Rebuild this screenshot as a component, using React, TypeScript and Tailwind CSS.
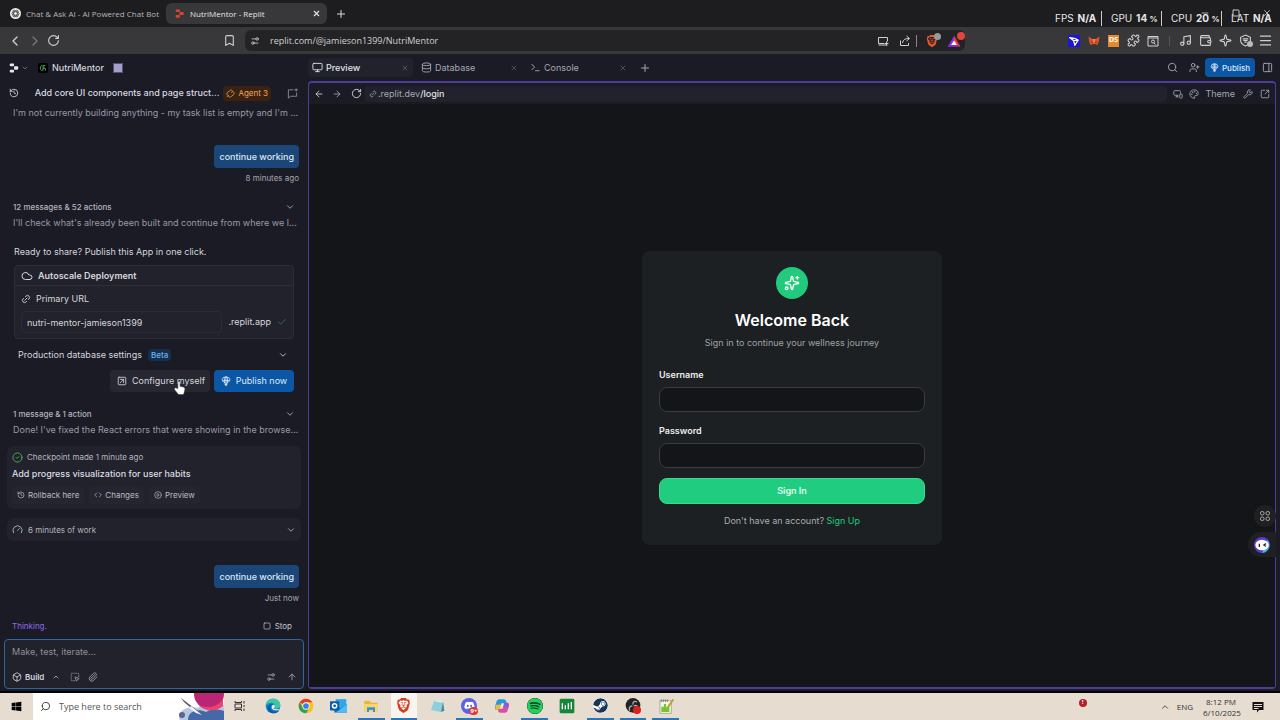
import type { ReactNode } from 'react';
import {
  ArrowLeft, ArrowRight, ArrowUp, Bookmark, Box, ChevronDown, ChevronLeft, ChevronRight, ChevronUp,
  CircleCheck, Check, Cloud, Code, Database, Gauge, History, Link2, Menu, Monitor,
  MonitorSmartphone, Music, Palette, Paperclip, PanelRight, Plus, Puzzle, RotateCw, Search,
  Sparkle, Sparkles, Square, SquareArrowOutUpRight, SquareDashedMousePointer,
  Terminal, UserPlus, Wallet, Wrench, X, Minus, Settings2, CirclePlay, SquareArrowUpRight,
} from 'lucide-react';
import { FaDiscord, FaSpotify, FaSteam, FaWindows } from 'react-icons/fa';
import { SiBrave } from 'react-icons/si';

const previewTabs = [
  { icon: Monitor, label: 'Preview', active: true },
  { icon: Database, label: 'Database', active: false },
  { icon: Terminal, label: 'Console', active: false },
];

const checkpointActions = [
  { icon: History, label: 'Rollback here' },
  { icon: Code, label: 'Changes' },
  { icon: CirclePlay, label: 'Preview' },
];

function IconButton({ label, children, className = '' }: { label: string; children: ReactNode; className?: string }) {
  return (
    <button aria-label={label} className={`flex shrink-0 items-center justify-center ${className}`}>
      {children}
    </button>
  );
}

function BalloonIcon({ className }: { className: string }) {
  return (
    <svg viewBox="0 0 24 24" className={className} fill="none" stroke="currentColor" strokeWidth="2">
      <path d="M9 17C5 14 3 12 3 9a9 7 0 0 1 18 0c0 3-2 5-6 8Z" />
      <path d="M9 17C7 10 9 2 12 2s5 8 3 15M12 2v15M4 11h16" />
      <path d="M10 19h4v3h-4Z" fill="currentColor" />
    </svg>
  );
}

function BrowserTabs() {
  return (
    <div className="relative flex h-[27px] shrink-0 items-center bg-[#1d1d20] text-[8px]">
      <div className="flex w-[166px] items-center gap-[5px] overflow-hidden pl-[10px] text-[#b5b5b8]">
        <svg viewBox="0 0 24 24" className="size-[11px] shrink-0">
          <circle cx="12" cy="12" r="12" fill="#eee" />
          <g fill="none" stroke="#555" strokeWidth="2">
            <ellipse cx="12" cy="12" rx="8" ry="4" />
            <ellipse cx="12" cy="12" rx="8" ry="4" transform="rotate(60 12 12)" />
            <ellipse cx="12" cy="12" rx="8" ry="4" transform="rotate(120 12 12)" />
          </g>
        </svg>
        <span className="whitespace-nowrap">Chat &amp; Ask AI - AI Powered Chat Bot</span>
      </div>
      <div className="flex h-[21px] w-[161px] items-center rounded-md bg-[#38383b] pr-[6px] pl-[9px] text-[#e4e4e6]">
        <svg viewBox="0 0 24 24" className="mr-[6px] size-[9px]" fill="#d8442c">
          <rect x="2" y="1" width="11" height="7" rx="1" />
          <rect x="12" y="8" width="11" height="8" rx="1" />
          <rect x="2" y="16" width="11" height="7" rx="1" />
        </svg>
        <span className="flex-1 whitespace-nowrap">NutriMentor - Replit</span>
        <IconButton label="Close tab"><X className="size-[9px]" strokeWidth={3} /></IconButton>
      </div>
      <IconButton label="New tab" className="ml-2 text-[#ddd]"><Plus className="size-3" /></IconButton>

      {/* Window controls sit under the performance overlay */}
      <div className="absolute top-2 right-2 flex gap-[22px] text-[#c8c8ca]">
        <IconButton label="Minimize"><Minus className="size-[10px]" /></IconButton>
        <IconButton label="Maximize"><Square className="size-[8px]" strokeWidth={3} /></IconButton>
        <IconButton label="Close"><X className="size-[10px]" /></IconButton>
      </div>
      <div className="absolute top-[11px] right-[10px] flex font-['Inter'] text-[10px] leading-[14px] text-[#e6e6e6]">
        <div className="w-[46px]">FPS <b className="ml-px">N/A</b></div>
        <div className="w-[60px] border-l border-[#ccc] pl-[9px] whitespace-nowrap">GPU <b className="ml-px">14 <small className="text-[8px]">%</small></b></div>
        <div className="w-[60px] border-l border-[#ccc] pl-[9px] whitespace-nowrap">CPU <b className="ml-px">20 <small className="text-[8px]">%</small></b></div>
        <div className="w-[49px] border-l border-[#ccc] pl-[9px] whitespace-nowrap">LAT <b className="ml-px">N/A</b></div>
      </div>
    </div>
  );
}

function BrowserToolbar() {
  return (
    <div className="flex h-[27px] shrink-0 items-center bg-[#38383b] text-[#d0d0d2]">
      <nav className="flex w-[221px] items-center gap-1 pl-[7px]">
        <IconButton label="Back"><ChevronLeft className="size-4" /></IconButton>
        <IconButton label="Forward" className="text-[#77777a]"><ChevronRight className="size-4" /></IconButton>
        <IconButton label="Reload"><RotateCw className="size-[13px]" /></IconButton>
      </nav>
      <IconButton label="Bookmark" className="w-4"><Bookmark className="size-[13px]" /></IconButton>
      <div className="ml-2 flex h-[21px] min-w-0 flex-1 items-center rounded-md bg-[#232326] pl-[5px]">
        <Settings2 className="size-[10px] shrink-0 -scale-y-100" />
        <input aria-label="Address" defaultValue="replit.com/@jamieson1399/NutriMentor" className="ml-[10px] min-w-0 flex-1 bg-transparent text-[9px] outline-none" />
        <div className="flex items-center">
          <IconButton label="Install app" className="w-[22px]">
            <svg viewBox="0 0 24 24" className="size-[12px]" fill="none" stroke="currentColor" strokeWidth="2">
              <path d="M21 13V5H3v12h11M3 20h18M15 17h8M19 13v8" />
            </svg>
          </IconButton>
          <IconButton label="Share" className="w-[22px]">
            <svg viewBox="0 0 24 24" className="size-[12px]" fill="none" stroke="currentColor" strokeWidth="2">
              <path d="M3 11v10h16v-5M7 16c1-6 4-9 13-9M15 2l6 5-6 5" />
            </svg>
          </IconButton>
          <span className="h-3 w-px bg-[#88888b]" />
          <IconButton label="Brave Shields" className="relative ml-1 w-[22px] text-[#f0562c]">
            <SiBrave className="size-3" />
            <span className="absolute -top-0.5 right-0.5 size-[7px] rounded-full bg-[#999]" />
          </IconButton>
          <IconButton label="Rewards" className="relative w-[22px]">
            <svg viewBox="0 0 24 24" className="size-[14px]">
              <path d="M12 3 1 22h22Z" fill="#8a2be2" />
              <path d="m12 3 11 19-11-5Z" fill="#e8432e" />
              <path d="m12 11 5 8H7Z" fill="#fff" />
            </svg>
            <span className="absolute -top-0.5 right-0 size-2 rounded-full bg-[#e2453a]" />
          </IconButton>
        </div>
      </div>
      <div className="ml-[99px] flex items-center pr-[5px]">
        <IconButton label="Bird wallet" className="w-5">
          <span className="flex size-3 items-center justify-center bg-[#1c17d6] text-white">
            <svg viewBox="0 0 24 24" className="size-[10px]" fill="none" stroke="currentColor" strokeWidth="3"><path d="m2 4 13 2 7 4-8 12-3-11ZM2 4l9 7 11-1" /></svg>
          </span>
        </IconButton>
        <IconButton label="MetaMask" className="w-5">
          <svg viewBox="0 0 24 24" className="size-3">
            <path d="m1 3 8 5h6l8-5-1 10-3 7-6-2h-2l-6 2-3-7Z" fill="#d9502b" />
            <path d="m9 8 3 10 3-10Z" fill="#f08a4b" />
            <path d="m6 13 3 1v2Zm12 0-3 1v2Z" fill="#222" />
          </svg>
        </IconButton>
        <IconButton label="DS" className="w-[19px]">
          <span className="flex h-3 w-[11px] items-center justify-center bg-[#e38a2e] text-[7px] font-bold text-white">DS</span>
        </IconButton>
        <IconButton label="Extensions" className="w-5"><Puzzle className="size-[13px]" /></IconButton>
        <IconButton label="Page search" className="w-5">
          <svg viewBox="0 0 24 24" className="size-3" fill="none" stroke="currentColor" strokeWidth="2"><path d="M2 3h20v19H2ZM2 6h20M14 16l3 3" /><circle cx="12" cy="13" r="3" /></svg>
        </IconButton>
        <span className="mr-[5px] ml-[6px] h-[10px] w-px bg-[#55555a]" />
        <IconButton label="Playlist" className="w-5"><Music className="size-[13px]" /></IconButton>
        <IconButton label="Wallet" className="w-5"><Wallet className="size-[13px]" /></IconButton>
        <IconButton label="Leo AI" className="w-5"><Sparkle className="size-[13px]" /></IconButton>
        <IconButton label="VPN" className="relative w-5">
          <svg viewBox="0 0 24 24" className="size-[13px]" fill="none" stroke="currentColor" strokeWidth="2">
            <path d="M12 2 21 6v6c0 5-4 8-9 10-5-2-9-5-9-10V6Z" /><path d="M7 9h10M8 12h8M10 15h4" />
          </svg>
          <span className="absolute right-[2px] bottom-0 size-[6px] rounded-full bg-[#bbb]" />
        </IconButton>
        <IconButton label="Menu" className="w-5"><Menu className="size-[15px]" /></IconButton>
      </div>
    </div>
  );
}

function UserMessage({ text, time }: { text: string; time: string }) {
  return (
    <div className="flex flex-col items-end gap-[2px] pr-[9px]">
      <div className="flex h-[23px] items-center rounded-sm bg-[#1b4778] px-[5px] text-[9px] font-medium text-[#d9e6f5]">{text}</div>
      <time className="text-[8px] leading-4 text-[#a5a7b0]">{time}</time>
    </div>
  );
}

function MessageGroup({ title, summary }: { title: string; summary: string }) {
  return (
    <div className="pr-[13px] pl-[13px]">
      <button className="flex w-full items-center justify-between text-[8px] leading-4 font-medium text-[#b4b6be]">
        {title}
        <ChevronDown className="size-[10px]" />
      </button>
      <p className="text-[9px] leading-4 whitespace-nowrap text-[#989aa5]">{summary}</p>
    </div>
  );
}

function PublishCard() {
  return (
    <section className="mt-[13px] pr-[14px] pl-[14px] text-[9px] text-[#d5d6dc]">
      <p className="leading-4">Ready to share? Publish this App in one click.</p>
      <div className="mt-[5px] rounded-sm border border-[#2d2e38] bg-[#21222b]">
        <h3 className="flex h-5 items-center gap-[5px] border-b border-[#2d2e38] px-[6px] font-semibold">
          <Cloud className="size-3" />
          Autoscale Deployment
        </h3>
        <div className="px-[6px] pt-[5px] pb-[5px]">
          <label htmlFor="primary-url" className="flex items-center gap-[5px] leading-4">
            <Link2 className="size-[10px] -rotate-45" />
            Primary URL
          </label>
          <div className="mt-1 flex items-center">
            <input id="primary-url" defaultValue="nutri-mentor-jamieson1399" className="h-[22px] min-w-0 flex-1 rounded-sm border border-[#2a2b35] px-[5px] outline-none" />
            <span className="ml-[6px]">.replit.app</span>
            <Check className="ml-[6px] size-[10px] text-[#3c7449]" />
          </div>
        </div>
      </div>
      <button className="mt-2 flex w-full items-center pr-[6px] pl-1 leading-4">
        Production database settings
        <span className="ml-[6px] rounded-sm bg-[#14304f] px-[3px] text-[8px] leading-3 font-medium text-[#6fb0ee]">Beta</span>
        <ChevronDown className="ml-auto size-[10px]" />
      </button>
      <div className="mt-[7px] flex justify-end gap-1">
        <button className="relative flex h-[22px] w-[100px] items-center gap-[5px] rounded-sm bg-[#262730] px-[7px] whitespace-nowrap">
          <SquareArrowUpRight className="size-[10px] shrink-0" />
          Configure myself
          <svg viewBox="0 0 20 26" className="absolute top-[10px] left-[64px] h-4 w-[11px]">
            <path d="M7 14V3c0-3 4-3 4 0v7l6 1c2 1 3 2 3 4-1 4-1 7-3 10H8L1 16c-1-2 1-4 3-3Z" fill="#fff" stroke="#333" />
          </svg>
        </button>
        <button className="flex h-[22px] w-20 items-center justify-center gap-[5px] rounded-sm bg-[#0b56a5] whitespace-nowrap text-[#dceafa]">
          <BalloonIcon className="size-[10px] shrink-0" />
          Publish now
        </button>
      </div>
    </section>
  );
}

function Sidebar() {
  return (
    <aside className="flex w-[308px] shrink-0 flex-col font-['Inter']">
      <header className="flex h-[27px] shrink-0 items-center pl-[9px] text-[9px] text-[#d5d6dc]">
        <svg viewBox="0 0 24 24" className="size-[10px]" fill="#e8e8ec">
          <rect x="2" y="1" width="10" height="7" rx="2" />
          <rect x="12" y="8" width="10" height="8" rx="2" />
          <rect x="2" y="16" width="10" height="7" rx="2" />
        </svg>
        <ChevronDown className="ml-[2px] size-2 text-[#888]" />
        <span className="mr-1 ml-[9px] flex size-[10px] items-center justify-center rounded-xs bg-black">
          <svg viewBox="0 0 24 24" className="size-[8px]" fill="none" stroke="#4fae5c" strokeWidth="3"><path d="M10 4c-8 2-8 14 0 16M12 20V5h7M12 12h6l2 8" /></svg>
        </span>
        <span className="font-medium">NutriMentor</span>
        <span className="ml-[10px] size-2 bg-[#a59fce] outline-1 outline-[#55516f]" />
      </header>
      <header className="flex h-6 shrink-0 items-center pr-[10px] pl-[9px] text-[9px] text-[#d9dae0]">
        <History className="size-[10px]" />
        <h2 className="ml-auto font-medium whitespace-nowrap">Add core UI components and page struct...</h2>
        <span className="ml-1 flex h-[15px] items-center gap-[3px] rounded-sm bg-[#3a2213] px-[3px] text-[8px] whitespace-nowrap text-[#f0a55c]">
          <svg viewBox="0 0 24 24" className="size-[9px]" fill="none" stroke="currentColor" strokeWidth="2">
            <path d="M10 5c2-4 8-2 7 2 5 0 6 5 3 8l-6 5c-3 3-8 1-8-3-4-1-5-5-2-8ZM6 17l-3 4M17 7l-3 3" />
          </svg>
          Agent 3
        </span>
        <svg viewBox="0 0 24 24" className="ml-4 size-[11px] text-[#8a8c97]" fill="none" stroke="currentColor" strokeWidth="2">
          <path d="M14 4H3v18l5-4h13v-8M20 1v7M16 4h8" />
        </svg>
      </header>

      {/* Conversation */}
      <div className="min-h-0 flex-1 overflow-hidden">
        <p className="mb-6 pl-[13px] text-[9px] leading-4 whitespace-nowrap text-[#989aa5]">
          I'm not currently building anything - my task list is empty and I'm ...
        </p>
        <UserMessage text="continue working" time="8 minutes ago" />
        <div className="mt-[13px]">
          <MessageGroup title="12 messages & 52 actions" summary="I'll check what's already been built and continue from where we l..." />
        </div>
        <PublishCard />
        <div className="mt-[14px]">
          <MessageGroup title="1 message & 1 action" summary="Done! I've fixed the React errors that were showing in the browse..." />
        </div>
        <section className="mt-2 mr-[7px] ml-[7px] rounded-md bg-[#21222b] px-[5px] pt-[3px] pb-[5px]">
          <p className="flex items-center gap-1 text-[8px] leading-4 text-[#b4b6be]">
            <CircleCheck className="size-[11px] text-[#4fae5c]" />
            Checkpoint made 1 minute ago
          </p>
          <h3 className="text-[9px] leading-[18px] font-medium text-[#dcdde3]">Add progress visualization for user habits</h3>
          <div className="mt-[3px] flex gap-[5px]">
            {checkpointActions.map((action) => {
              const Icon = action.icon;
              return (
                <button key={action.label} className="flex h-[18px] items-center gap-[3px] rounded-sm bg-[#24252e] px-[5px] text-[8px] text-[#b9bbc3]">
                  <Icon className="size-2" />
                  {action.label}
                </button>
              );
            })}
          </div>
        </section>
        <button className="mx-[7px] mt-[9px] mb-6 flex h-[23px] w-[294px] items-center gap-[5px] rounded-md bg-[#21222b] px-[5px] text-[8px] text-[#b4b6be]">
          <Gauge className="size-[11px]" />
          6 minutes of work
          <ChevronDown className="ml-auto size-[10px]" />
        </button>
        <UserMessage text="continue working" time="Just now" />
      </div>

      <div className="flex h-[34px] shrink-0 items-center justify-between pt-2 pr-4 pl-3 text-[8px]">
        <span className="text-[#9168e8]">Thinking.</span>
        <button className="flex items-center gap-1 text-[#c3c5cc]">
          <Square className="size-2" />
          Stop
        </button>
      </div>
      <form className="mr-1 mb-[2px] ml-1 flex h-[50px] shrink-0 flex-col justify-between rounded-sm border border-[#2c66a3] bg-[#21222b] pt-1 pr-[6px] pb-[2px] pl-[7px]">
        <input aria-label="Message" placeholder="Make, test, iterate..." className="text-[9px] leading-4 outline-none placeholder:text-[#8e909b]" />
        <div className="flex h-[18px] items-center text-[#a5a7b0]">
          <button type="button" className="flex items-center gap-[3px] text-[8px] font-semibold text-[#d5d6dc]">
            <Box className="size-[10px]" />
            Build
            <ChevronUp className="ml-[5px] size-2" />
          </button>
          <IconButton label="Select element" className="ml-[10px]"><SquareDashedMousePointer className="size-[10px]" /></IconButton>
          <IconButton label="Attach" className="ml-2"><Paperclip className="size-[10px]" /></IconButton>
          <IconButton label="Options" className="ml-auto"><Settings2 className="size-[10px] -scale-y-100" /></IconButton>
          <IconButton label="Send" className="ml-[11px]"><ArrowUp className="size-[10px]" /></IconButton>
        </div>
      </form>
    </aside>
  );
}

function LoginCard() {
  return (
    <form className="flex w-[300px] flex-col rounded-lg bg-[#1c2022] px-[17px] py-4 font-['Inter'] text-[9px] text-[#eceded]">
      <div className="mx-auto flex size-8 items-center justify-center rounded-full bg-[#22ca7d]">
        <Sparkles className="size-4 text-white" />
      </div>
      <h1 className="mt-[9px] text-center text-[16px] leading-6 font-semibold text-white">Welcome Back</h1>
      <p className="mt-[3px] text-center leading-4 text-[#9fa3a5]">Sign in to continue your wellness journey</p>
      <label htmlFor="username" className="mt-4 leading-4 font-semibold">Username</label>
      <input id="username" className="mt-1 h-[25px] rounded-lg border border-[#3a3d40] bg-[#141518] px-2 outline-none" />
      <label htmlFor="password" className="mt-[11px] leading-4 font-semibold">Password</label>
      <input id="password" type="password" className="mt-1 h-[25px] rounded-lg border border-[#3a3d40] bg-[#141518] px-2 outline-none" />
      <button type="button" className="mt-[10px] h-[26px] rounded-lg border border-[#3bd890] bg-[#20cd80] font-semibold text-[#e3fbf0]">Sign In</button>
      <p className="mt-[9px] text-center leading-4 text-[#a9adaf]">
        Don't have an account? <a href="#" className="text-[#22ca7d]">Sign Up</a>
      </p>
    </form>
  );
}

function Workspace() {
  return (
    <main className="flex min-w-0 flex-1 flex-col pr-1 font-['Inter'] text-[9px] text-[#a5a7b0]">
      <div className="flex h-[27px] shrink-0 items-center">
        {previewTabs.map((tab) => {
          const Icon = tab.icon;
          return (
            <div key={tab.label} className={`mr-1 flex h-[19px] w-[105px] items-center rounded-sm pr-1 pl-1 ${tab.active ? 'bg-[#21222b] text-[#e0e1e6]' : ''}`}>
              <Icon className="mr-[3px] size-[11px]" />
              <span className={tab.active ? 'font-medium' : ''}>{tab.label}</span>
              <IconButton label={`Close ${tab.label}`} className="ml-auto text-[#666873]"><X className="size-2" /></IconButton>
            </div>
          );
        })}
        <IconButton label="New pane" className="ml-1"><Plus className="size-3" /></IconButton>
        <div className="ml-auto flex items-center">
          <IconButton label="Search" className="w-[21px]"><Search className="size-[11px]" /></IconButton>
          <IconButton label="Invite" className="w-[22px]"><UserPlus className="size-[11px]" /></IconButton>
          <button className="flex h-[19px] w-[50px] items-center justify-center gap-[3px] rounded-sm bg-[#0b56a5] text-[8px] font-medium text-[#dceafa]">
            <BalloonIcon className="size-[9px]" />
            Publish
          </button>
          <IconButton label="Toggle panel" className="mr-px ml-1 w-4"><PanelRight className="size-[11px]" /></IconButton>
        </div>
      </div>

      <div className="mb-[2px] flex min-h-0 flex-1 flex-col rounded-sm border border-y-2 border-[#4f3b9c]">
        <div className="flex h-[21px] shrink-0 items-center pr-[3px] pl-[3px]">
          <IconButton label="Back" className="w-[14px] text-[#d5d6dc]"><ArrowLeft className="size-[10px]" /></IconButton>
          <IconButton label="Forward" className="ml-1 w-[14px]"><ArrowRight className="size-[10px]" /></IconButton>
          <IconButton label="Reload" className="ml-[5px] w-[14px] text-[#d5d6dc]"><RotateCw className="size-[11px]" /></IconButton>
          <div className="ml-[2px] flex h-4 min-w-0 flex-1 items-center rounded-sm bg-[#21222b] pl-1">
            <Link2 className="mr-px size-2 -rotate-45" />
            <span>.replit.dev</span>
            <input aria-label="Path" defaultValue="/login" className="min-w-0 flex-1 font-medium text-[#e0e1e6] outline-none" />
          </div>
          <div className="flex items-center">
            <IconButton label="Devices" className="ml-1 w-[14px]"><MonitorSmartphone className="size-[10px]" /></IconButton>
            <button className="ml-1 flex items-center gap-[6px]"><Palette className="size-[10px]" />Theme</button>
            <IconButton label="Dev tools" className="ml-[6px] w-[14px]"><Wrench className="size-[10px]" /></IconButton>
            <IconButton label="Open in new tab" className="ml-[3px] w-[14px]"><SquareArrowOutUpRight className="size-[10px]" /></IconButton>
          </div>
        </div>
        <div className="relative flex min-h-0 flex-1 items-center justify-center bg-[#141518] pt-[5px]">
          <LoginCard />
          {/* Floating extension buttons */}
          <div className="absolute top-[401px] -right-px flex flex-col items-end gap-[5px]">
            <IconButton label="Apps" className="size-[22px] rounded-full bg-[#202022] text-[#aaa]">
              <svg viewBox="0 0 24 24" className="size-3" fill="none" stroke="currentColor" strokeWidth="2">
                <rect x="3" y="3" width="7" height="7" rx="3" /><rect x="14" y="3" width="7" height="7" rx="3" />
                <rect x="3" y="14" width="7" height="7" rx="3" /><rect x="14" y="14" width="7" height="7" rx="3" />
              </svg>
            </IconButton>
            <IconButton label="Assistant" className="h-[25px] w-7 rounded-l-full bg-[#202022]">
              <svg viewBox="0 0 24 24" className="size-4">
                <circle cx="12" cy="12" r="12" fill="#5b37d9" />
                <path d="M20 4a12 12 0 0 1-8 20Z" fill="#3fb5d8" />
                <ellipse cx="12" cy="12" rx="10" ry="8" fill="#fff" />
                <path d="M8 10v5M18 10l-3 2 3 2" fill="none" stroke="#222" strokeWidth="2" />
              </svg>
            </IconButton>
          </div>
        </div>
      </div>
    </main>
  );
}

const taskbarApps: { label: string; running?: boolean; active?: boolean; icon: ReactNode }[] = [
  {
    label: 'Task View',
    icon: (
      <svg viewBox="0 0 24 24" className="size-3" fill="none" stroke="#333" strokeWidth="2">
        <path d="M2 2v3h13V2M2 22v-3h13v3M2 8h13v8H2ZM20 2v5M20 10v4M20 17v5" />
      </svg>
    ),
  },
  {
    label: 'Edge',
    icon: (
      <svg viewBox="0 0 24 24" className="size-4">
        <circle cx="12" cy="12" r="11" fill="#1586cf" />
        <path d="M1 11C3-3 23-2 23 11c0 5-6 6-9 4 3-4 0-8-4-8-4 0-8 2-9 4Z" fill="#3fc8a0" />
        <path d="M9 11c-3 6 4 12 12 8-5 7-18 4-17-5 1-5 8-6 10-4-2-1-4 0-5 1Z" fill="#0c5aa5" />
        <path d="M13 10c3 1 2 4 0 5 2 3 8 2 9 1-1 3-12 4-12-2 0-2 1-4 3-4Z" fill="#f4e9e0" />
      </svg>
    ),
  },
  {
    label: 'Chrome',
    icon: (
      <svg viewBox="0 0 24 24" className="size-4">
        <circle cx="12" cy="12" r="11" fill="#fbc116" />
        <path d="M12 12 2.500 6.500A11 11 0 0 1 21.500 6.500H12Z" fill="#e33b2e" />
        <path d="M2.500 6.500A11 11 0 0 0 12 23l5-8.500-5 2.500-4.500-2.500Z" fill="#2da14c" />
        <circle cx="12" cy="12" r="5.500" fill="#fff" />
        <circle cx="12" cy="12" r="4.300" fill="#3b7ded" />
      </svg>
    ),
  },
  {
    label: 'Outlook',
    icon: (
      <svg viewBox="0 0 24 24" className="size-[17px]">
        <path d="M8 3h15v18H8Z" fill="#2fa6e8" />
        <path d="m6 10 9 6 9-6v12H6Z" fill="#1471c6" />
        <path d="m24 10-15 11h15Z" fill="#45c0f5" />
        <rect y="6" width="13" height="13" rx="1" fill="#0b5cab" />
        <circle cx="6.500" cy="12.500" r="3" fill="none" stroke="#fff" strokeWidth="2" />
      </svg>
    ),
  },
  {
    label: 'File Explorer',
    running: true,
    icon: (
      <svg viewBox="0 0 24 24" className="size-4">
        <path d="M2 4h8l2 3h10v13H2Z" fill="#e9b737" />
        <path d="M2 9h20v11H2Z" fill="#fad66b" />
        <path d="M6 14h12v7h-3v-3H9v3H6Z" fill="#3f90d6" />
      </svg>
    ),
  },
  { label: 'Brave', running: true, active: true, icon: <SiBrave className="size-[15px] text-[#d83b1f]" /> },
  {
    label: 'Notepad',
    icon: (
      <svg viewBox="0 0 24 24" className="size-4">
        <path d="m8 3 13 2-3 16-15-3Z" fill="#8dcfdd" />
        <path d="m21 5 2 14-5 2Z" fill="#4c8796" />
        <path d="m9 3 12 2v2L8 5Z" fill="#d9eef2" />
      </svg>
    ),
  },
  {
    label: 'Discord',
    running: true,
    icon: (
      <span className="relative flex size-4 items-center justify-center rounded-full bg-[#5b62e3] text-white">
        <FaDiscord className="size-[11px]" />
        <span className="absolute -right-px -bottom-px rounded-full bg-[#d9363e] px-px text-[6px] leading-[8px] font-bold">9+</span>
      </span>
    ),
  },
  {
    label: 'Copilot',
    icon: (
      <svg viewBox="0 0 24 24" className="size-4">
        <path d="M8 2h7c2 0 3 2 4 5l-5 1-3 10H5c-5 0-4-4-2-10 1-4 2-6 5-6Z" fill="#269bdc" />
        <path d="M3 10c-2 6-1 8 3 8h4l2-8Z" fill="#e9bd36" />
        <path d="M16 22H9c-2 0-3-2-3-5l5-1 3-9h5c5 0 4 4 2 10-1 4-2 5-5 5Z" fill="#d850a0" />
        <path d="M21 14c2-6 1-7-3-7h-4l-2 7Z" fill="#7d65d8" />
        <path d="m11 8-2 8h4l2-8Z" fill="#f1e7df" />
      </svg>
    ),
  },
  {
    label: 'Spotify',
    running: true,
    icon: <FaSpotify className="size-4 rounded-full bg-[#12351d] text-[#1fd15e]" />,
  },
  {
    label: 'Task Manager',
    icon: (
      <svg viewBox="0 0 24 24" className="size-4">
        <rect x="1" y="1" width="22" height="22" rx="2" fill="#14873a" />
        <path d="M5 8v9M9.500 11v6M14 8v9M18.500 6v11" stroke="#fff" strokeWidth="2" />
      </svg>
    ),
  },
  { label: 'Steam', running: true, icon: <FaSteam className="size-[15px] rounded-full bg-white text-[#15355c]" /> },
  {
    label: 'Recorder',
    running: true,
    icon: (
      <svg viewBox="0 0 24 24" className="size-4">
        <circle cx="12" cy="11" r="11" fill="#232225" />
        <path d="M12 10c-1-5 3-6 6-4M11 12c-5 0-5 4-4 7M13 12c4-2 6 0 7 3" fill="none" stroke="#aaa" strokeWidth="2" />
        <circle cx="18" cy="18" r="6" fill="#dc1f1f" />
      </svg>
    ),
  },
  {
    label: 'Notepad++',
    running: true,
    icon: (
      <svg viewBox="0 0 24 24" className="size-4">
        <path d="M3 4h17v19H3Z" fill="#f1f5e6" stroke="#8a9377" />
        <path d="M5 13h4V9h3v4h5v8H5Z" fill="#7ac52e" />
        <path d="m22 1-7 10-1 4 3-2 7-10Z" fill="#c29a35" />
        <path d="M5 2v4M8 2v4M11 2v4M14 2v4" stroke="#555" />
      </svg>
    ),
  },
];

function Taskbar() {
  return (
    <footer className="flex h-[29px] shrink-0 items-stretch border-t-2 border-black bg-[#e6dcd0] text-[#333]">
      <IconButton label="Start" className="w-[33px] text-black"><FaWindows className="size-[11px]" /></IconButton>
      <label className="relative flex w-[191px] items-center bg-white pl-[7px]">
        <Search className="size-[11px] -scale-x-100" />
        <input placeholder="Type here to search" className="ml-2 w-[110px] text-[9px] outline-none placeholder:text-[#555]" />
        <svg viewBox="0 0 48 27" className="ml-auto h-[27px] w-12">
          <path d="M4 27C0 18 12 12 22 15c7-8 18-7 26-3v15Z" fill="#bac6e5" />
          <path d="M12 27c0-9 10-12 18-8 6-4 12-3 18-1v9Z" fill="#4668a8" />
          <circle cx="33" cy="1" r="15" fill="#b92675" />
          <path d="M22 11C30 17 43 14 47 5v8C41 19 27 19 22 11Z" fill="#ec426b" />
          <path d="m5 5 21 16-8-4C10 11 6 8 4 3Z" fill="#575c70" />
          <path d="m15 13 11 9-6-2-7-5Z" fill="#f0f4fa" />
          <circle cx="6" cy="22" r="3" fill="#586690" />
        </svg>
      </label>
      <nav className="grid w-[458px] grid-cols-14">
        {taskbarApps.map((app) => (
          <button
            key={app.label}
            aria-label={app.label}
            className={`mx-[3px] flex items-center justify-center border-b-2 ${app.active ? 'bg-[#f8f5f1]' : ''} ${app.running ? 'border-[#2876bd]' : 'border-transparent'}`}
          >
            {app.icon}
          </button>
        ))}
      </nav>
      <div className="ml-auto flex items-center text-[8px] leading-[11px]">
        <span className="mr-[73px] mb-2 flex size-2 items-center justify-center rounded-full bg-[#b3202a] text-[6px] font-bold text-white">!</span>
        <IconButton label="Show hidden icons"><ChevronUp className="size-[10px]" /></IconButton>
        <span className="ml-[7px]">ENG</span>
        <div className="ml-[10px] w-9 text-center whitespace-nowrap">
          <div>8:12 PM</div>
          <div>6/10/2025</div>
        </div>
        <IconButton label="Notifications" className="mr-4 ml-[13px]">
          <svg viewBox="0 0 24 24" className="size-3">
            <path d="M1 2h22v16h-9l-4 5v-5H1Z" fill="#111" />
            <path d="M4 7h16M4 11h16M4 15h9" stroke="#e6dcd0" strokeWidth="2" />
          </svg>
        </IconButton>
      </div>
    </footer>
  );
}

export default function App() {
  return (
    <div className="flex h-screen flex-col overflow-hidden bg-[#1b1b25] font-['Open_Sans',sans-serif]">
      <BrowserTabs />
      <BrowserToolbar />
      <div className="flex min-h-0 flex-1">
        <Sidebar />
        <Workspace />
      </div>
      <Taskbar />
    </div>
  );
}
